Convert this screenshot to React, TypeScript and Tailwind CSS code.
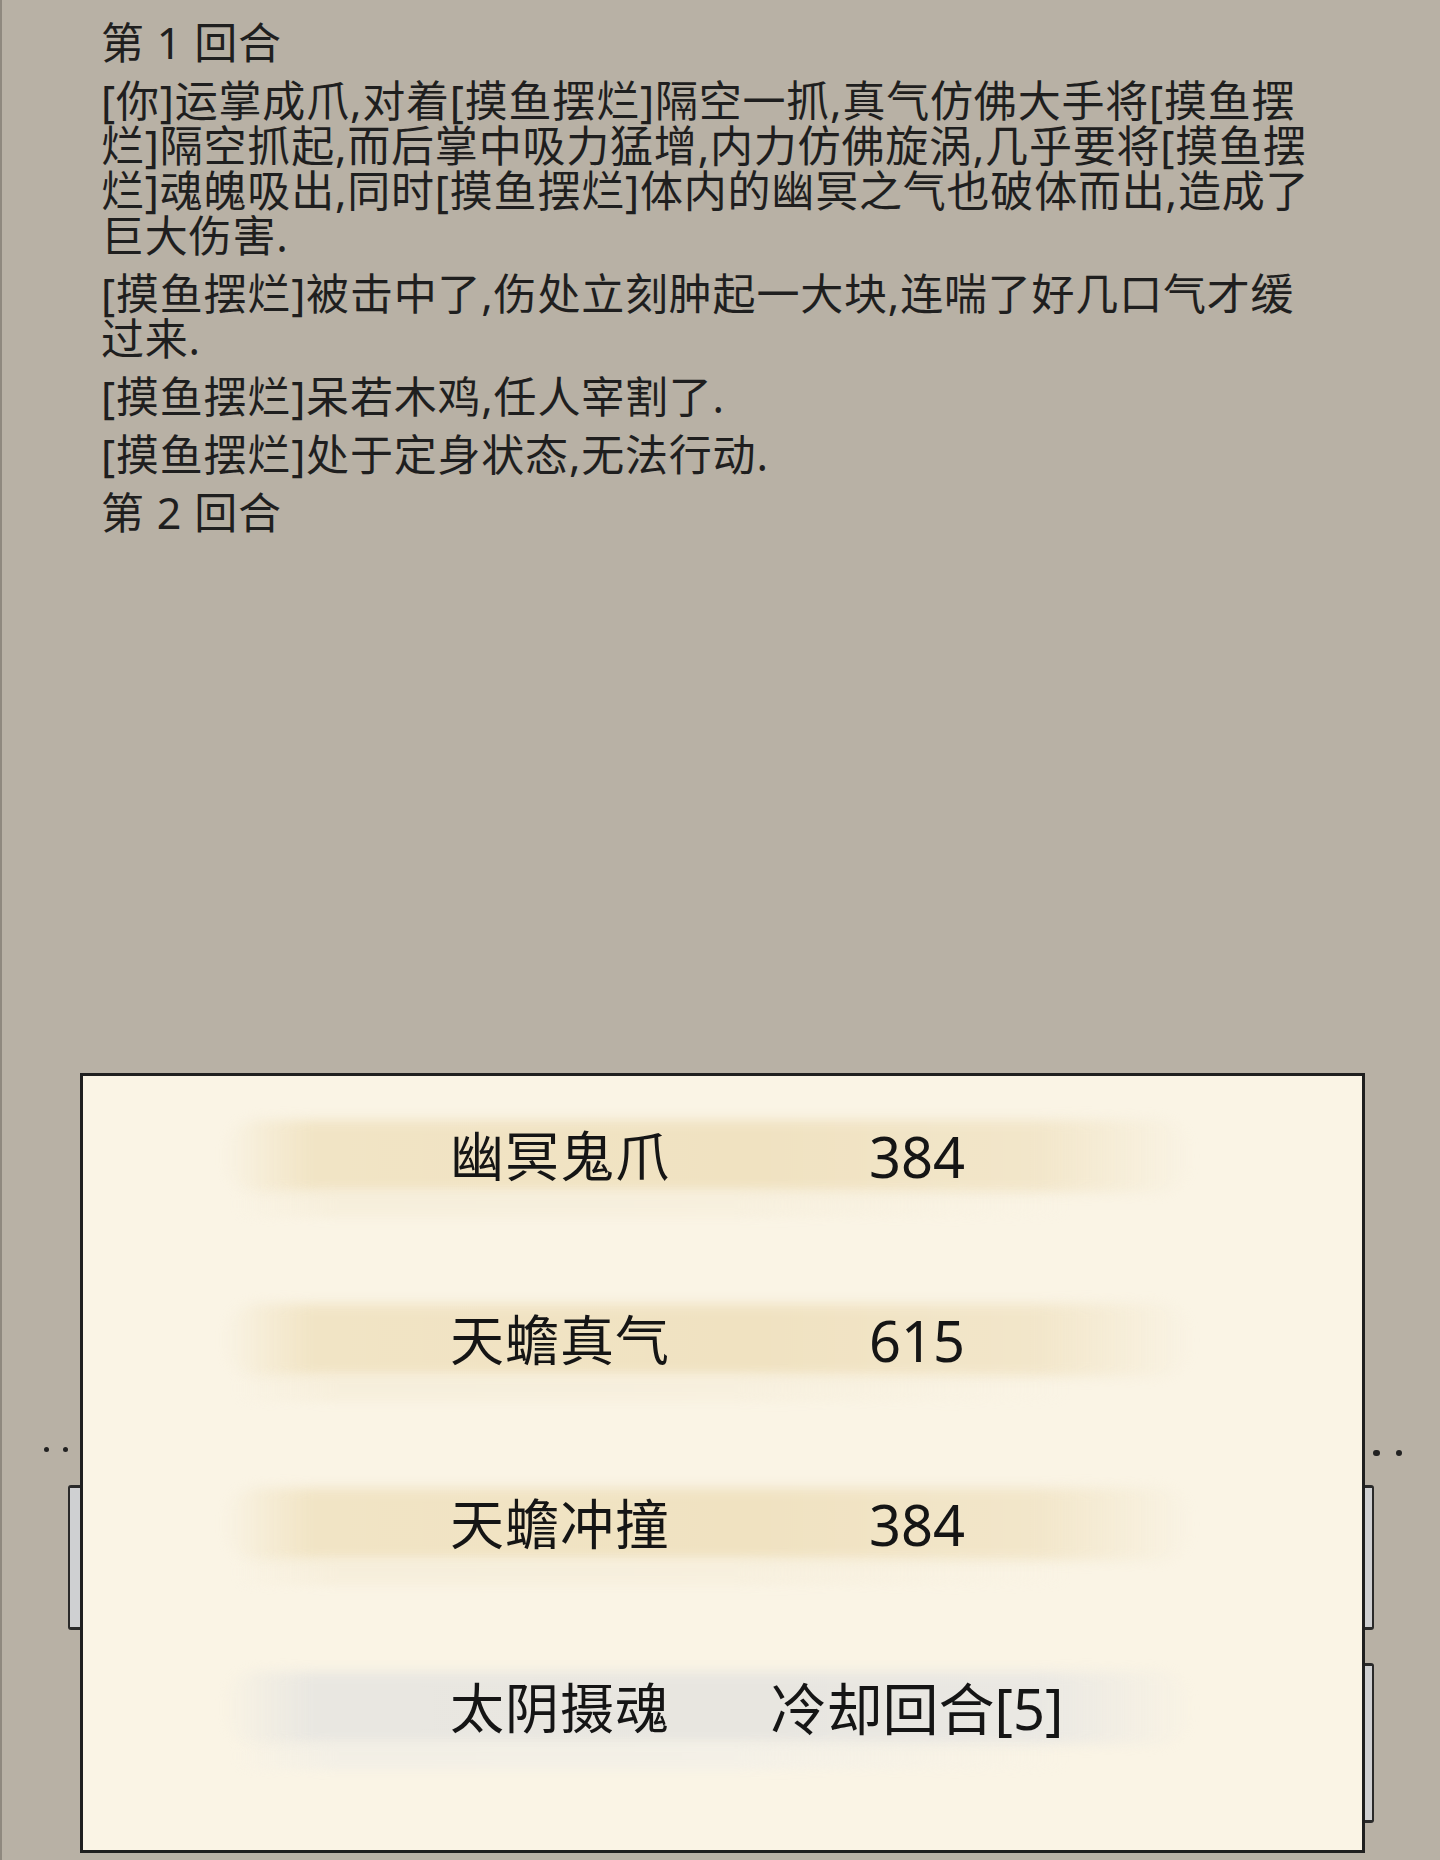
import React from "react";

const log: string[][] = [
  ["第 1 回合"],
  [
    "[你]运掌成爪,对着[摸鱼摆烂]隔空一抓,真气仿佛大手将[摸鱼摆",
    "烂]隔空抓起,而后掌中吸力猛增,内力仿佛旋涡,几乎要将[摸鱼摆",
    "烂]魂魄吸出,同时[摸鱼摆烂]体内的幽冥之气也破体而出,造成了",
    "巨大伤害.",
  ],
  ["[摸鱼摆烂]被击中了,伤处立刻肿起一大块,连喘了好几口气才缓", "过来."],
  ["[摸鱼摆烂]呆若木鸡,任人宰割了."],
  ["[摸鱼摆烂]处于定身状态,无法行动."],
  ["第 2 回合"],
];

interface Skill {
  name: string;
  value: string;
  ready: boolean;
}

const skills: Skill[] = [
  { name: "幽冥鬼爪", value: "384", ready: true },
  { name: "天蟾真气", value: "615", ready: true },
  { name: "天蟾冲撞", value: "384", ready: true },
  { name: "太阴摄魂", value: "冷却回合[5]", ready: false },
];

const font = "font-['Noto_Sans','Noto_Sans_CJK_SC',sans-serif]";

function SkillRow({ skill }: { skill: Skill }) {
  return (
    <div className="relative h-[68px]">
      {/* brush stroke behind the text */}
      <div
        className={`absolute -top-[2px] -bottom-[2px] left-[140px] w-[970px] rounded-full blur-[6px] ${
          skill.ready
            ? "bg-[linear-gradient(90deg,rgba(241,229,200,0)_0%,#f1e4c5_9%,#f0e2c1_55%,#f2e6ca_84%,rgba(242,230,204,0)_100%)]"
            : "bg-[linear-gradient(90deg,rgba(234,232,227,0)_0%,#e9e7e1_9%,#e8e6e0_55%,#eae8e3_84%,rgba(234,232,226,0)_100%)]"
        }`}
      />
      <div
        className={`absolute left-[150px] top-[68px] h-[28px] w-[840px] rounded-full opacity-60 blur-[4px] ${
          skill.ready
            ? "bg-[linear-gradient(90deg,rgba(246,238,219,0)_0%,#f5ecd7_12%,#f6eedb_60%,rgba(246,238,219,0)_100%)]"
            : "bg-[linear-gradient(90deg,rgba(240,238,232,0)_0%,#efede7_12%,#f1efe9_60%,rgba(240,238,232,0)_100%)]"
        }`}
      />
      <div className="relative flex h-full items-center pl-[367px] text-[#151515]">
        <span className="w-[267px] text-[54px] leading-none tracking-[1px]">{skill.name}</span>
        <span className="w-[400px] text-center text-[56px] leading-none">{skill.value}</span>
      </div>
    </div>
  );
}

export default function App() {
  return (
    <div
      className={`relative flex h-[1860px] w-[1440px] flex-col overflow-hidden border-l-2 border-[#8f897f] bg-[#b8b1a5] ${font}`}
    >
      <div className="flex flex-col gap-[13px] pl-[99px] pt-[20px] text-[43px] leading-[45px] tracking-[0.8px] text-[#1f1f1f]">
        {log.map((para, i) => (
          <div key={i}>
            {para.map((line, j) => (
              <div key={j} className="whitespace-nowrap">
                {line}
              </div>
            ))}
          </div>
        ))}
      </div>

      {/* partially hidden controls behind the skill panel */}
      <div className="absolute left-[42px] top-[1447px] flex gap-[14px]">
        <span className="h-[5px] w-[5px] rounded-full bg-[#222]" />
        <span className="h-[5px] w-[5px] rounded-full bg-[#222]" />
      </div>
      <div className="absolute left-[1371px] top-[1450px] flex gap-[16px]">
        <span className="h-[6px] w-[7px] rounded-full bg-[#222]" />
        <span className="h-[6px] w-[6px] rounded-full bg-[#222]" />
      </div>
      <div className="absolute left-[66px] top-[1485px] h-[145px] w-[15px] rounded-l-[3px] border-y-[3px] border-l-2 border-[#2a2a2a] bg-[#cfd0d2]" />
      <div className="absolute left-[1361px] top-[1485px] h-[145px] w-[11px] rounded-r-[3px] border-y-[3px] border-r-2 border-[#2a2a2a] bg-[#cfd0d2]" />
      <div className="absolute left-[1361px] top-[1663px] h-[160px] w-[11px] rounded-r-[3px] border-y-[3px] border-r-2 border-[#2a2a2a] bg-[#cfd0d2]" />

      <div className="relative mb-[7px] ml-[78px] mt-auto h-[780px] w-[1285px] border-[3px] border-[#1f1f1f] bg-[#faf4e5]">
        <div className="flex flex-col gap-[116px] pt-[46px]">
          {skills.map((s, i) => (
            <SkillRow key={i} skill={s} />
          ))}
        </div>
      </div>
    </div>
  );
}
